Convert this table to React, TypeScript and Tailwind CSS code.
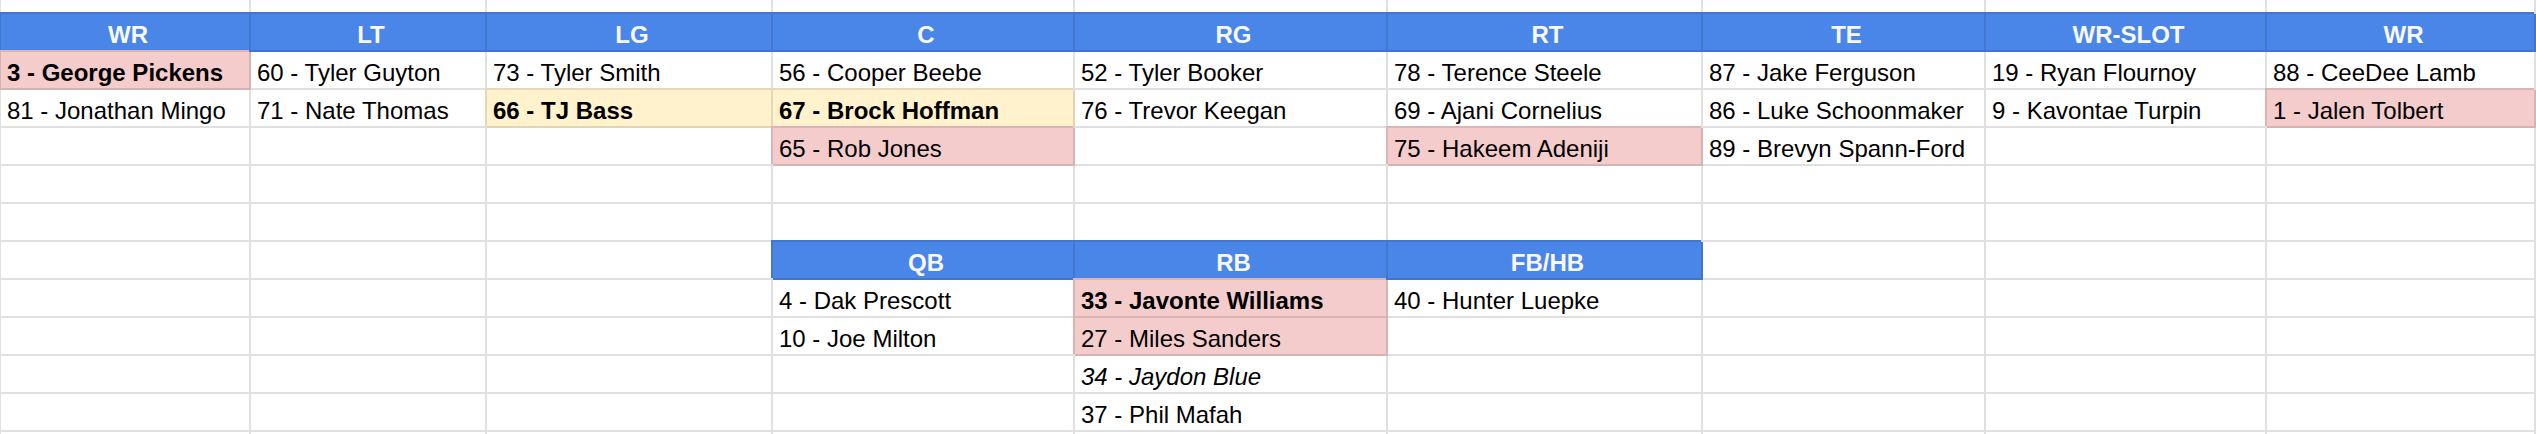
import React from 'react';

type Fill = 'pink' | 'yellow' | 'blue';
type CellData = { t: string; fill?: Fill; b?: boolean; i?: boolean } | null;

// depth chart sheet, columns sized to match the sheet
const fillClass: Record<Fill, string> = {
    pink: 'bg-[#f4cccc] shadow-[-2px_-2px_0_#dcb4b4]',
    yellow: 'bg-[#fff2cc] shadow-[-2px_-2px_0_#e4d9b6]',
    blue: 'bg-[#4a86e8] shadow-[-2px_-2px_0_#4177cf] justify-center text-[#f8f8f8] font-bold pl-0',
};

const h = (t: string): CellData => ({ t, fill: 'blue' });
const p = (t: string): CellData => ({ t });

const rows: CellData[][] = [
    [h('WR'), h('LT'), h('LG'), h('C'), h('RG'), h('RT'), h('TE'), h('WR-SLOT'), h('WR')],
    [
        { t: '3 - George Pickens', fill: 'pink', b: true },
        p('60 - Tyler Guyton'),
        p('73 - Tyler Smith'),
        p('56 - Cooper Beebe'),
        p('52 - Tyler Booker'),
        p('78 - Terence Steele'),
        p('87 - Jake Ferguson'),
        p('19 - Ryan Flournoy'),
        p('88 - CeeDee Lamb'),
    ],
    [
        p('81 - Jonathan Mingo'),
        p('71 - Nate Thomas'),
        { t: '66 - TJ Bass', fill: 'yellow', b: true },
        { t: '67 - Brock Hoffman', fill: 'yellow', b: true },
        p('76 - Trevor Keegan'),
        p('69 - Ajani Cornelius'),
        p('86 - Luke Schoonmaker'),
        p('9 - Kavontae Turpin'),
        { t: '1 - Jalen Tolbert', fill: 'pink' },
    ],
    [null, null, null, { t: '65 - Rob Jones', fill: 'pink' }, null, { t: '75 - Hakeem Adeniji', fill: 'pink' }, p('89 - Brevyn Spann-Ford'), null, null],
    [null, null, null, null, null, null, null, null, null],
    [null, null, null, null, null, null, null, null, null],
    [null, null, null, h('QB'), h('RB'), h('FB/HB'), null, null, null],
    [null, null, null, p('4 - Dak Prescott'), { t: '33 - Javonte Williams', fill: 'pink', b: true }, p('40 - Hunter Luepke'), null, null, null],
    [null, null, null, p('10 - Joe Milton'), { t: '27 - Miles Sanders', fill: 'pink' }, null, null, null, null],
    [null, null, null, null, { t: '34 - Jaydon Blue', i: true }, null, null, null, null],
    [null, null, null, null, p('37 - Phil Mafah'), null, null, null, null],
];

function Cell({ cell, first }: { cell: CellData; first: boolean }) {
    return (
        <div
            className={`flex h-[38px] items-end overflow-hidden whitespace-nowrap border-b-2 border-r-2 border-[rgba(0,0,0,0.12)] pb-px pl-[6px] leading-[normal] ${
                first ? 'border-l' : ''
            } ${cell?.fill ? fillClass[cell.fill] : ''} ${cell?.b ? 'font-bold' : ''} ${cell?.i ? 'italic' : ''}`}
        >
            {cell?.t}
        </div>
    );
}

export default function App() {
    return (
        <div className="grid w-[2536px] grid-cols-[251px_236px_286px_302px_313px_315px_283px_281px_269px] bg-white font-['Liberation_Sans',Arial,sans-serif] text-[24px] text-black">
            {Array.from({ length: 9 }).map((_, c) => (
                <div key={`top-${c}`} className={`h-[14px] border-r-2 border-[rgba(0,0,0,0.12)] ${c === 0 ? 'border-l' : ''}`} />
            ))}
            {rows.map((row, r) =>
                row.map((cell, c) => <Cell key={`${r}-${c}`} cell={cell} first={c === 0} />)
            )}
            {Array.from({ length: 9 }).map((_, c) => (
                <div key={`bot-${c}`} className={`h-[2px] border-r-2 border-[rgba(0,0,0,0.12)] ${c === 0 ? 'border-l' : ''}`} />
            ))}
        </div>
    );
}
